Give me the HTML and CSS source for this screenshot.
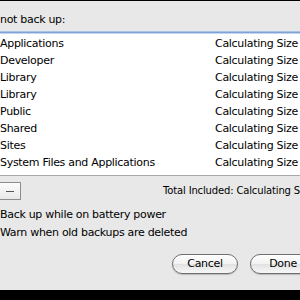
FILE: index.html
```html
<!DOCTYPE html>
<html>
<head>
	<meta charset="utf-8">
	<title>Time Machine Options</title>
	<link rel="stylesheet" href="styles.css">
</head>
<body>
	<div class="sheet">
		<div class="caption">not back up:</div>
		<div class="list">
			<div class="row"><span class="name">Applications</span><span class="size">Calculating Size</span></div>
			<div class="row"><span class="name">Developer</span><span class="size">Calculating Size</span></div>
			<div class="row"><span class="name">Library</span><span class="size">Calculating Size</span></div>
			<div class="row"><span class="name">Library</span><span class="size">Calculating Size</span></div>
			<div class="row"><span class="name">Public</span><span class="size">Calculating Size</span></div>
			<div class="row"><span class="name">Shared</span><span class="size">Calculating Size</span></div>
			<div class="row"><span class="name">Sites</span><span class="size">Calculating Size</span></div>
			<div class="row"><span class="name">System Files and Applications</span><span class="size">Calculating Size</span></div>
		</div>
		<div class="listbar">
			<div class="minus"><span></span></div>
			<div class="total">Total Included: Calculating Size</div>
		</div>
		<div class="options">
			<div class="option">Back up while on battery power</div>
			<div class="option">Warn when old backups are deleted</div>
		</div>
		<div class="buttons">
			<div class="btn">Cancel</div>
			<div class="btn">Done</div>
		</div>
	</div>
	<div class="dock"></div>
</body>
</html>
```

FILE: styles.css
```css
html, body {
	margin: 0;
	padding: 0;
	width: 300px;
	height: 300px;
	overflow: hidden;
	background-color: #000;
	font-family: 'DejaVu Sans', sans-serif;
	font-size: 11px;
	letter-spacing: -0.3px;
	color: #000;
}
.sheet {
	margin-top: 1px;
	height: 289px;
	background-color: #e8e8e8;
	display: flex;
	flex-direction: column;
	overflow: hidden;
}
.caption {
	flex: none;
	height: 30px;
	line-height: 17px;
	padding-top: 10px;
	box-sizing: border-box;
}
.list {
	flex: none;
	background-color: #fff;
	border-top: 1px solid #a9c3e4;
	box-shadow: inset 0 1px 0 #7ea3d6, inset 0 2px 0 #c5d6ec;
	padding-top: 3px;
	padding-bottom: 4px;
	border-bottom: 1px solid #a8a8a8;
	width: 302px;
}
.row {
	display: flex;
	height: 17px;
	line-height: 17px;
	white-space: nowrap;
}
.name {
	flex: none;
	width: 215px;
	overflow: hidden;
}
.size {
	flex: none;
}
.listbar {
	flex: none;
	display: flex;
	align-items: flex-start;
	height: 24px;
	padding-top: 6px;
	box-sizing: border-box;
}
.minus {
	flex: none;
	width: 21px;
	height: 18px;
	border: 1px solid #8d8d8d;
	border-left: none;
	background: linear-gradient(#fdfdfd, #e9e9e9);
	display: flex;
	align-items: center;
	justify-content: center;
	box-sizing: border-box;
}
.minus span {
	width: 8px;
	height: 1px;
	background-color: #555;
}
.total {
	margin-left: 142px;
	font-size: 10px;
	letter-spacing: -0.15px;
	line-height: 18px;
	white-space: nowrap;
}
.options {
	flex: none;
	padding-top: 6px;
}
.option {
	height: 18px;
	line-height: 18px;
	white-space: nowrap;
}
.buttons {
	flex: none;
	display: flex;
	gap: 12px;
	padding-left: 172px;
	margin-top: 12px;
}
.btn {
	flex: none;
	width: 66px;
	height: 20px;
	line-height: 18px;
	text-align: center;
	border: 1px solid #6f6f6f;
	border-radius: 10px;
	background: linear-gradient(#ffffff, #f1f1f1 50%, #e2e2e2 51%, #f7f7f7);
	box-shadow: 0 1px 1px rgba(0,0,0,0.2);
	box-sizing: border-box;
}
```
